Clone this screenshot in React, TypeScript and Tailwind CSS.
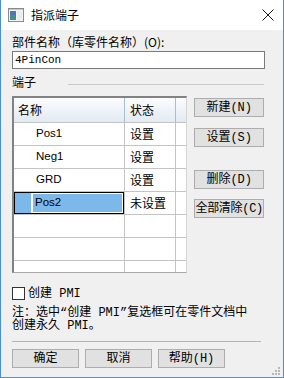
import React from 'react';

const cjk = { fontFamily: '"Noto Sans CJK SC", "Liberation Sans", sans-serif' };
const mono = { fontFamily: '"Liberation Mono", "Noto Sans CJK SC", monospace' };
const ui = { fontFamily: '"Liberation Sans", "Noto Sans CJK SC", sans-serif' };

type Row = { name: string; state: string; selected?: boolean };

const rows: Row[] = [
  { name: 'Pos1', state: '设置' },
  { name: 'Neg1', state: '设置' },
  { name: 'GRD', state: '设置' },
  { name: 'Pos2', state: '未设置', selected: true },
  { name: '', state: '' },
  { name: '', state: '' },
];

const Btn: React.FC<{ label: string; className?: string }> = ({ label, className }) => (
  <div
    className={`h-[19px] flex items-center justify-center whitespace-nowrap bg-[#e1e1e1] border border-[#adadad] text-[12px] leading-none text-black ${className ?? ''}`}
    style={mono}
  >
    {label}
  </div>
);

const App: React.FC = () => {
  return (
    <div className="relative w-[284px] h-[378px] border border-[#4a90d6] border-t-0 bg-[#f0f0f0] flex flex-col overflow-hidden" style={cjk}>
      {/* title bar */}
      <div className="h-[30px] bg-white flex items-center pl-[7px] pr-[9px] shrink-0">
        <svg width="16" height="14" viewBox="0 0 16 14">
          <rect x="0.5" y="0.5" width="15" height="13" fill="#f4f4f4" stroke="#8a8a8a" />
          <rect x="2" y="3" width="6" height="9" fill="#3f8f8a" />
          <rect x="2" y="3" width="6" height="4" fill="#4a78b8" />
          <rect x="9" y="3" width="5" height="9" fill="#e8eef0" />
          <rect x="1" y="1" width="14" height="1" fill="#b9c9d8" />
        </svg>
        <span className="ml-[7px] text-[12px] text-black leading-none">指派端子</span>
        <svg className="ml-auto" width="12" height="12" viewBox="0 0 12 12">
          <path d="M0.5 0.5 L11.5 11.5 M11.5 0.5 L0.5 11.5" stroke="#1a1a1a" strokeWidth="1" />
        </svg>
      </div>

      {/* body */}
      <div className="flex flex-col pl-[11px] pr-[19px]">
        <div className="mt-[5px] h-[14px] text-[12px] leading-[14px] text-black whitespace-nowrap">部件名称（库零件名称）(O):</div>
        <div className="mt-[2px] h-[18px] w-[253px] border border-[#7a7a7a] bg-white flex items-center pl-[2px]">
          <span className="text-[11px] text-black" style={mono}>4PinCon</span>
        </div>

        <div className="mt-[6px] h-[14px] flex items-center">
          <span className="text-[12px] leading-[14px] text-black">端子</span>
          <div className="ml-[32px] mt-[4px] flex-1 h-px bg-[#c8c8c8]" />
        </div>

        <div className="mt-[7px] flex">
          {/* list view */}
          <div className="w-[184px] h-[177px] border-t-2 border-l-2 border-[#828282] border-r border-b border-r-[#d4d4d4] border-b-[#a8a8a8] bg-white flex flex-col overflow-hidden">
            <div className="h-[24px] flex shrink-0 bg-gradient-to-b from-[#fbfcfe] to-[#e3eaf3] text-[12px] text-black">
              <div className="w-[111px] border-r border-[#a9bcd4] flex items-center pl-[4px]">名称</div>
              <div className="w-[51px] border-r border-[#a9bcd4] flex items-center pl-[5px]">状态</div>
              <div className="flex-1" />
            </div>
            {rows.map((r, i) => (
              <div key={i} className="h-[23px] flex shrink-0 border-t border-[#c4c4c4] text-black">
                <div className="w-[111px] border-r border-[#c4c4c4] flex">
                  {r.selected ? (
                    <div className="flex-1 flex border border-black bg-white">
                      <div className="w-[16px] bg-[#7db8ea]" />
                      <div className="flex-1 ml-px border border-white bg-[#7db8ea] flex items-center pl-[2px] text-[11.5px]" style={ui}>
                        {r.name}
                      </div>
                    </div>
                  ) : (
                    <div className="flex items-center pl-[22px] text-[11.5px]" style={ui}>{r.name}</div>
                  )}
                </div>
                <div className="w-[51px] border-r border-[#c4c4c4] flex items-center pl-[5px] text-[12px]">{r.state}</div>
                <div className="flex-1" />
              </div>
            ))}
            <div className="flex-1 flex border-t border-[#c4c4c4]">
              <div className="w-[111px] border-r border-[#c4c4c4]" />
              <div className="w-[51px] border-r border-[#c4c4c4]" />
            </div>
          </div>

          {/* side buttons */}
          <div className="ml-[7px] w-[73px] flex flex-col pt-[2px]">
            <Btn label="新建(N)" />
            <Btn label="设置(S)" className="mt-[11px]" />
            <Btn label="删除(D)" className="mt-[23px]" />
            <Btn label="全部清除(C)" className="mt-[10px] text-[11.5px] tracking-[-0.3px]" />
          </div>
        </div>

        <div className="mt-[14px] flex items-center h-[13px]">
          <div className="w-[13px] h-[13px] border border-[#333333] bg-white" />
          <span className="ml-[3px] text-[12px] leading-none text-black" style={mono}>创建 PMI</span>
        </div>

        <div className="mt-[7px] text-[12px] leading-[13px] text-black" style={mono}>
          <div className="whitespace-nowrap">注：选中“创建 PMI”复选框可在零件文档中</div>
          <div className="whitespace-nowrap">创建永久 PMI。</div>
        </div>

        <div className="mt-[8px] h-px w-[249px] bg-[#b4b4b4]" />

        <div className="mt-[7px] flex gap-[6px]">
          <Btn label="确定" className="w-[67px]" />
          <Btn label="取消" className="w-[67px]" />
          <Btn label="帮助(H)" className="w-[67px]" />
        </div>
      </div>

      {/* resize grip */}
      <svg className="absolute right-[2px] bottom-[1px]" width="9" height="9" viewBox="0 0 9 9">
        <rect x="6" y="0" width="2" height="2" fill="#b8b8b8" />
        <rect x="3" y="3" width="2" height="2" fill="#b8b8b8" />
        <rect x="6" y="3" width="2" height="2" fill="#b8b8b8" />
        <rect x="0" y="6" width="2" height="2" fill="#b8b8b8" />
        <rect x="3" y="6" width="2" height="2" fill="#b8b8b8" />
        <rect x="6" y="6" width="2" height="2" fill="#b8b8b8" />
      </svg>
    </div>
  );
};

export default App;
